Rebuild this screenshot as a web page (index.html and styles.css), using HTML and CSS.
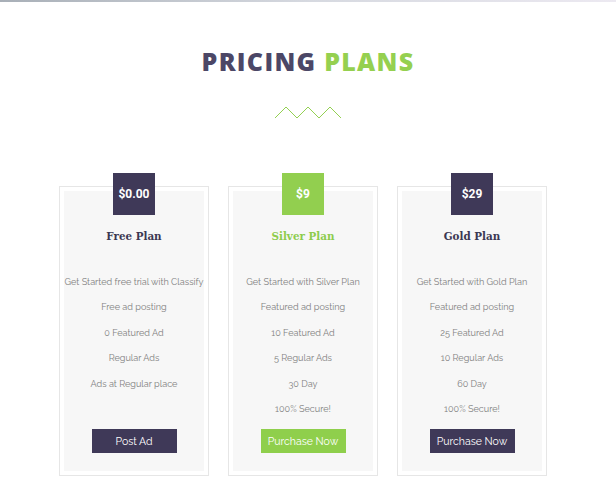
FILE: index.html
```html
<!DOCTYPE html>
<html>
<head>
<meta charset="utf-8">
<link rel="stylesheet" href="styles.css">
</head>
<body>
<div class="topline"></div>
<section class="pricing">
  <header class="head">
    <h1 class="title"><span class="dark">PRICING</span> <span class="green">PLANS</span></h1>
    <svg class="zigzag" width="68" height="14" viewBox="0 0 68 14">
      <polyline points="1,13 12,2 23,13 34,2 45,13 56,2 67,13" fill="none" stroke="#93d052" stroke-width="1"/>
    </svg>
  </header>
  <div class="cards">
    <div class="card">
      <div class="card-inner">
        <div class="price">$0.00</div>
        <h3 class="plan">Free Plan</h3>
        <ul class="features">
          <li>Get Started free trial with Classify</li>
          <li>Free ad posting</li>
          <li>0 Featured Ad</li>
          <li>Regular Ads</li>
          <li>Ads at Regular place</li>
        </ul>
        <a class="btn">Post Ad</a>
      </div>
    </div>
    <div class="card featured">
      <div class="card-inner">
        <div class="price">$9</div>
        <h3 class="plan">Silver Plan</h3>
        <ul class="features">
          <li>Get Started with Silver Plan</li>
          <li>Featured ad posting</li>
          <li>10 Featured Ad</li>
          <li>5 Regular Ads</li>
          <li>30 Day</li>
          <li>100% Secure!</li>
        </ul>
        <a class="btn">Purchase Now</a>
      </div>
    </div>
    <div class="card">
      <div class="card-inner">
        <div class="price">$29</div>
        <h3 class="plan">Gold Plan</h3>
        <ul class="features">
          <li>Get Started with Gold Plan</li>
          <li>Featured ad posting</li>
          <li>25 Featured Ad</li>
          <li>10 Regular Ads</li>
          <li>60 Day</li>
          <li>100% Secure!</li>
        </ul>
        <a class="btn">Purchase Now</a>
      </div>
    </div>
  </div>
</section>
</body>
</html>
```
FILE: styles.css
```css
html, body {
  margin: 0;
  padding: 0;
  background: #ffffff;
}
body {
  font-family: "Raleway", Lato, "Liberation Sans", sans-serif;
}
.topline {
  height: 2px;
  background: linear-gradient(to right, #a8afb7, #d6d9e0 50%, #ece9f1);
}
.head {
  text-align: center;
  padding-top: 44px;
}
.title {
  margin: 0;
  font-family: "Open Sans", Roboto, "Liberation Sans", sans-serif;
  font-weight: 800;
  font-size: 25px;
  line-height: 30px;
  letter-spacing: 1.3px;
}
.dark { color: #4c4766; }
.green { color: #95d050; }
.zigzag {
  display: block;
  margin: 29px auto 0;
}
.cards {
  display: flex;
  gap: 19px;
  margin: 67px 0 0 59px;
}
.card {
  width: 150px;
  box-sizing: border-box;
  border: 1px solid #e6e6e6;
  padding: 4px;
  background: #fff;
}
.card-inner {
  background: #f7f7f7;
  min-height: 280px;
  display: flex;
  flex-direction: column;
  align-items: center;
}
.price {
  width: 42px;
  height: 42px;
  margin-top: -18px;
  background: #3f3958;
  color: #fff;
  font-family: Roboto, "Liberation Sans", sans-serif;
  font-weight: 700;
  font-size: 12px;
  line-height: 42px;
  text-align: center;
}
.featured .price { background: #92cf4f; }
.plan {
  margin: 11px 0 0;
  font-family: "Roboto Slab", "DejaVu Serif", serif;
  font-stretch: condensed;
  font-weight: 700;
  font-size: 11.5px;
  line-height: 20px;
  color: #3b3752;
}
.featured .plan { color: #8dcc4c; }
.features {
  list-style: none;
  margin: 23px 0 0;
  padding: 0;
  text-align: center;
}
.features li {
  font-size: 9.1px;
  line-height: 25.4px;
  color: #808080;
  white-space: nowrap;
}
.btn {
  margin-top: auto;
  margin-bottom: 18px;
  width: 85px;
  height: 24px;
  line-height: 24px;
  text-align: center;
  background: #3f3958;
  color: #fff;
  font-size: 10.5px;
}
.featured .btn { background: #8fcf4c; }
```
